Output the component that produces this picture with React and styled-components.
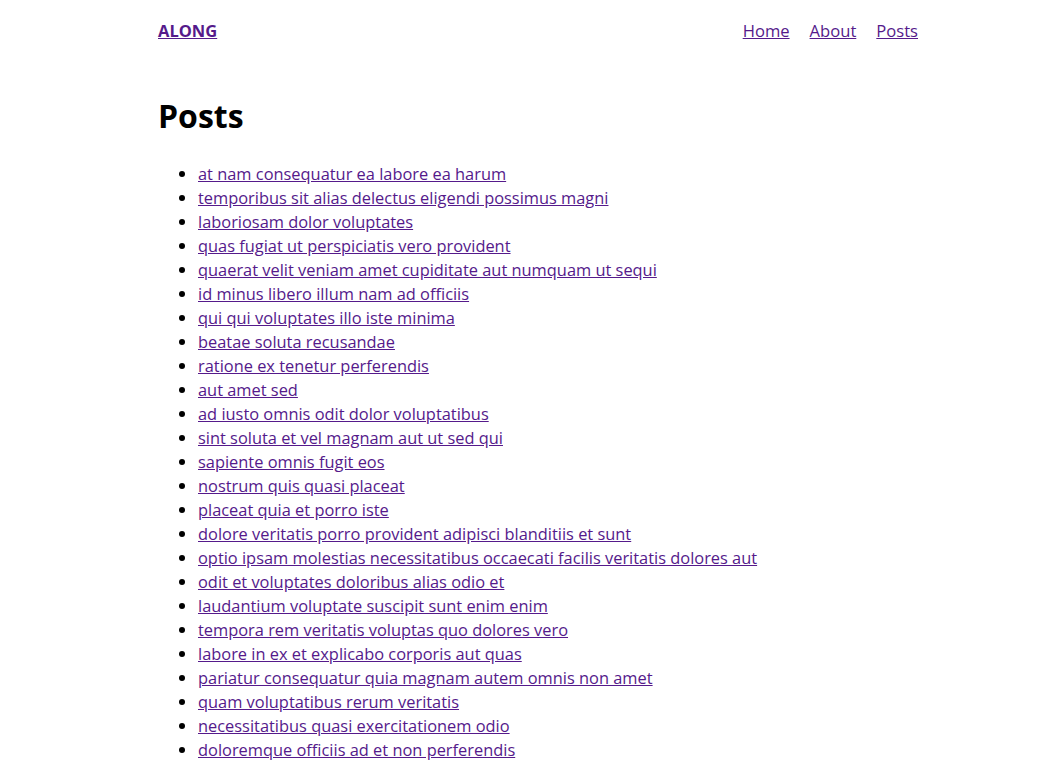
import React from 'react';
import styled, { createGlobalStyle } from 'styled-components';

const GlobalStyle = createGlobalStyle`
  body {
    margin: 0;
    background: #fff;
    color: #000;
    font-family: "Open Sans", "Noto Sans", sans-serif;
  }
`;

const Page = styled.div`
  max-width: 780px;
  margin: 0 auto;
  padding-left: 20px;
  box-sizing: border-box;
`;

const Header = styled.header`
  display: flex;
  align-items: center;
  justify-content: space-between;
  height: 60px;
`;

const Brand = styled.a`
  font-size: 16.5px;
  font-weight: 700;
  color: #551a8b;
  text-decoration: underline;
`;

const Nav = styled.nav`
  display: flex;
  gap: 20px;
`;

const NavLink = styled.a`
  font-size: 16.6px;
  color: #551a8b;
  text-decoration: underline;
`;

const Title = styled.h1`
  font-size: 32px;
  font-weight: 700;
  margin: 34px 0 24px;
  line-height: 44px;
`;

const PostList = styled.ul`
  margin: 0;
  padding-left: 40px;
`;

const PostItem = styled.li`
  font-size: 16.4px;
  line-height: 24px;
`;

const PostLink = styled.a`
  color: #551a8b;
  text-decoration: underline;
`;

const posts = [
  'at nam consequatur ea labore ea harum',
  'temporibus sit alias delectus eligendi possimus magni',
  'laboriosam dolor voluptates',
  'quas fugiat ut perspiciatis vero provident',
  'quaerat velit veniam amet cupiditate aut numquam ut sequi',
  'id minus libero illum nam ad officiis',
  'qui qui voluptates illo iste minima',
  'beatae soluta recusandae',
  'ratione ex tenetur perferendis',
  'aut amet sed',
  'ad iusto omnis odit dolor voluptatibus',
  'sint soluta et vel magnam aut ut sed qui',
  'sapiente omnis fugit eos',
  'nostrum quis quasi placeat',
  'placeat quia et porro iste',
  'dolore veritatis porro provident adipisci blanditiis et sunt',
  'optio ipsam molestias necessitatibus occaecati facilis veritatis dolores aut',
  'odit et voluptates doloribus alias odio et',
  'laudantium voluptate suscipit sunt enim enim',
  'tempora rem veritatis voluptas quo dolores vero',
  'labore in ex et explicabo corporis aut quas',
  'pariatur consequatur quia magnam autem omnis non amet',
  'quam voluptatibus rerum veritatis',
  'necessitatibus quasi exercitationem odio',
  'doloremque officiis ad et non perferendis',
];

export default function App() {
  return (
    <>
      <GlobalStyle />
      <Page>
        <Header>
          <Brand href="#">ALONG</Brand>
          <Nav>
            <NavLink href="#">Home</NavLink>
            <NavLink href="#">About</NavLink>
            <NavLink href="#">Posts</NavLink>
          </Nav>
        </Header>
        <Title>Posts</Title>
        <PostList>
          {posts.map((title, i) => (
            <PostItem key={i}>
              <PostLink href="#">{title}</PostLink>
            </PostItem>
          ))}
        </PostList>
      </Page>
    </>
  );
}
